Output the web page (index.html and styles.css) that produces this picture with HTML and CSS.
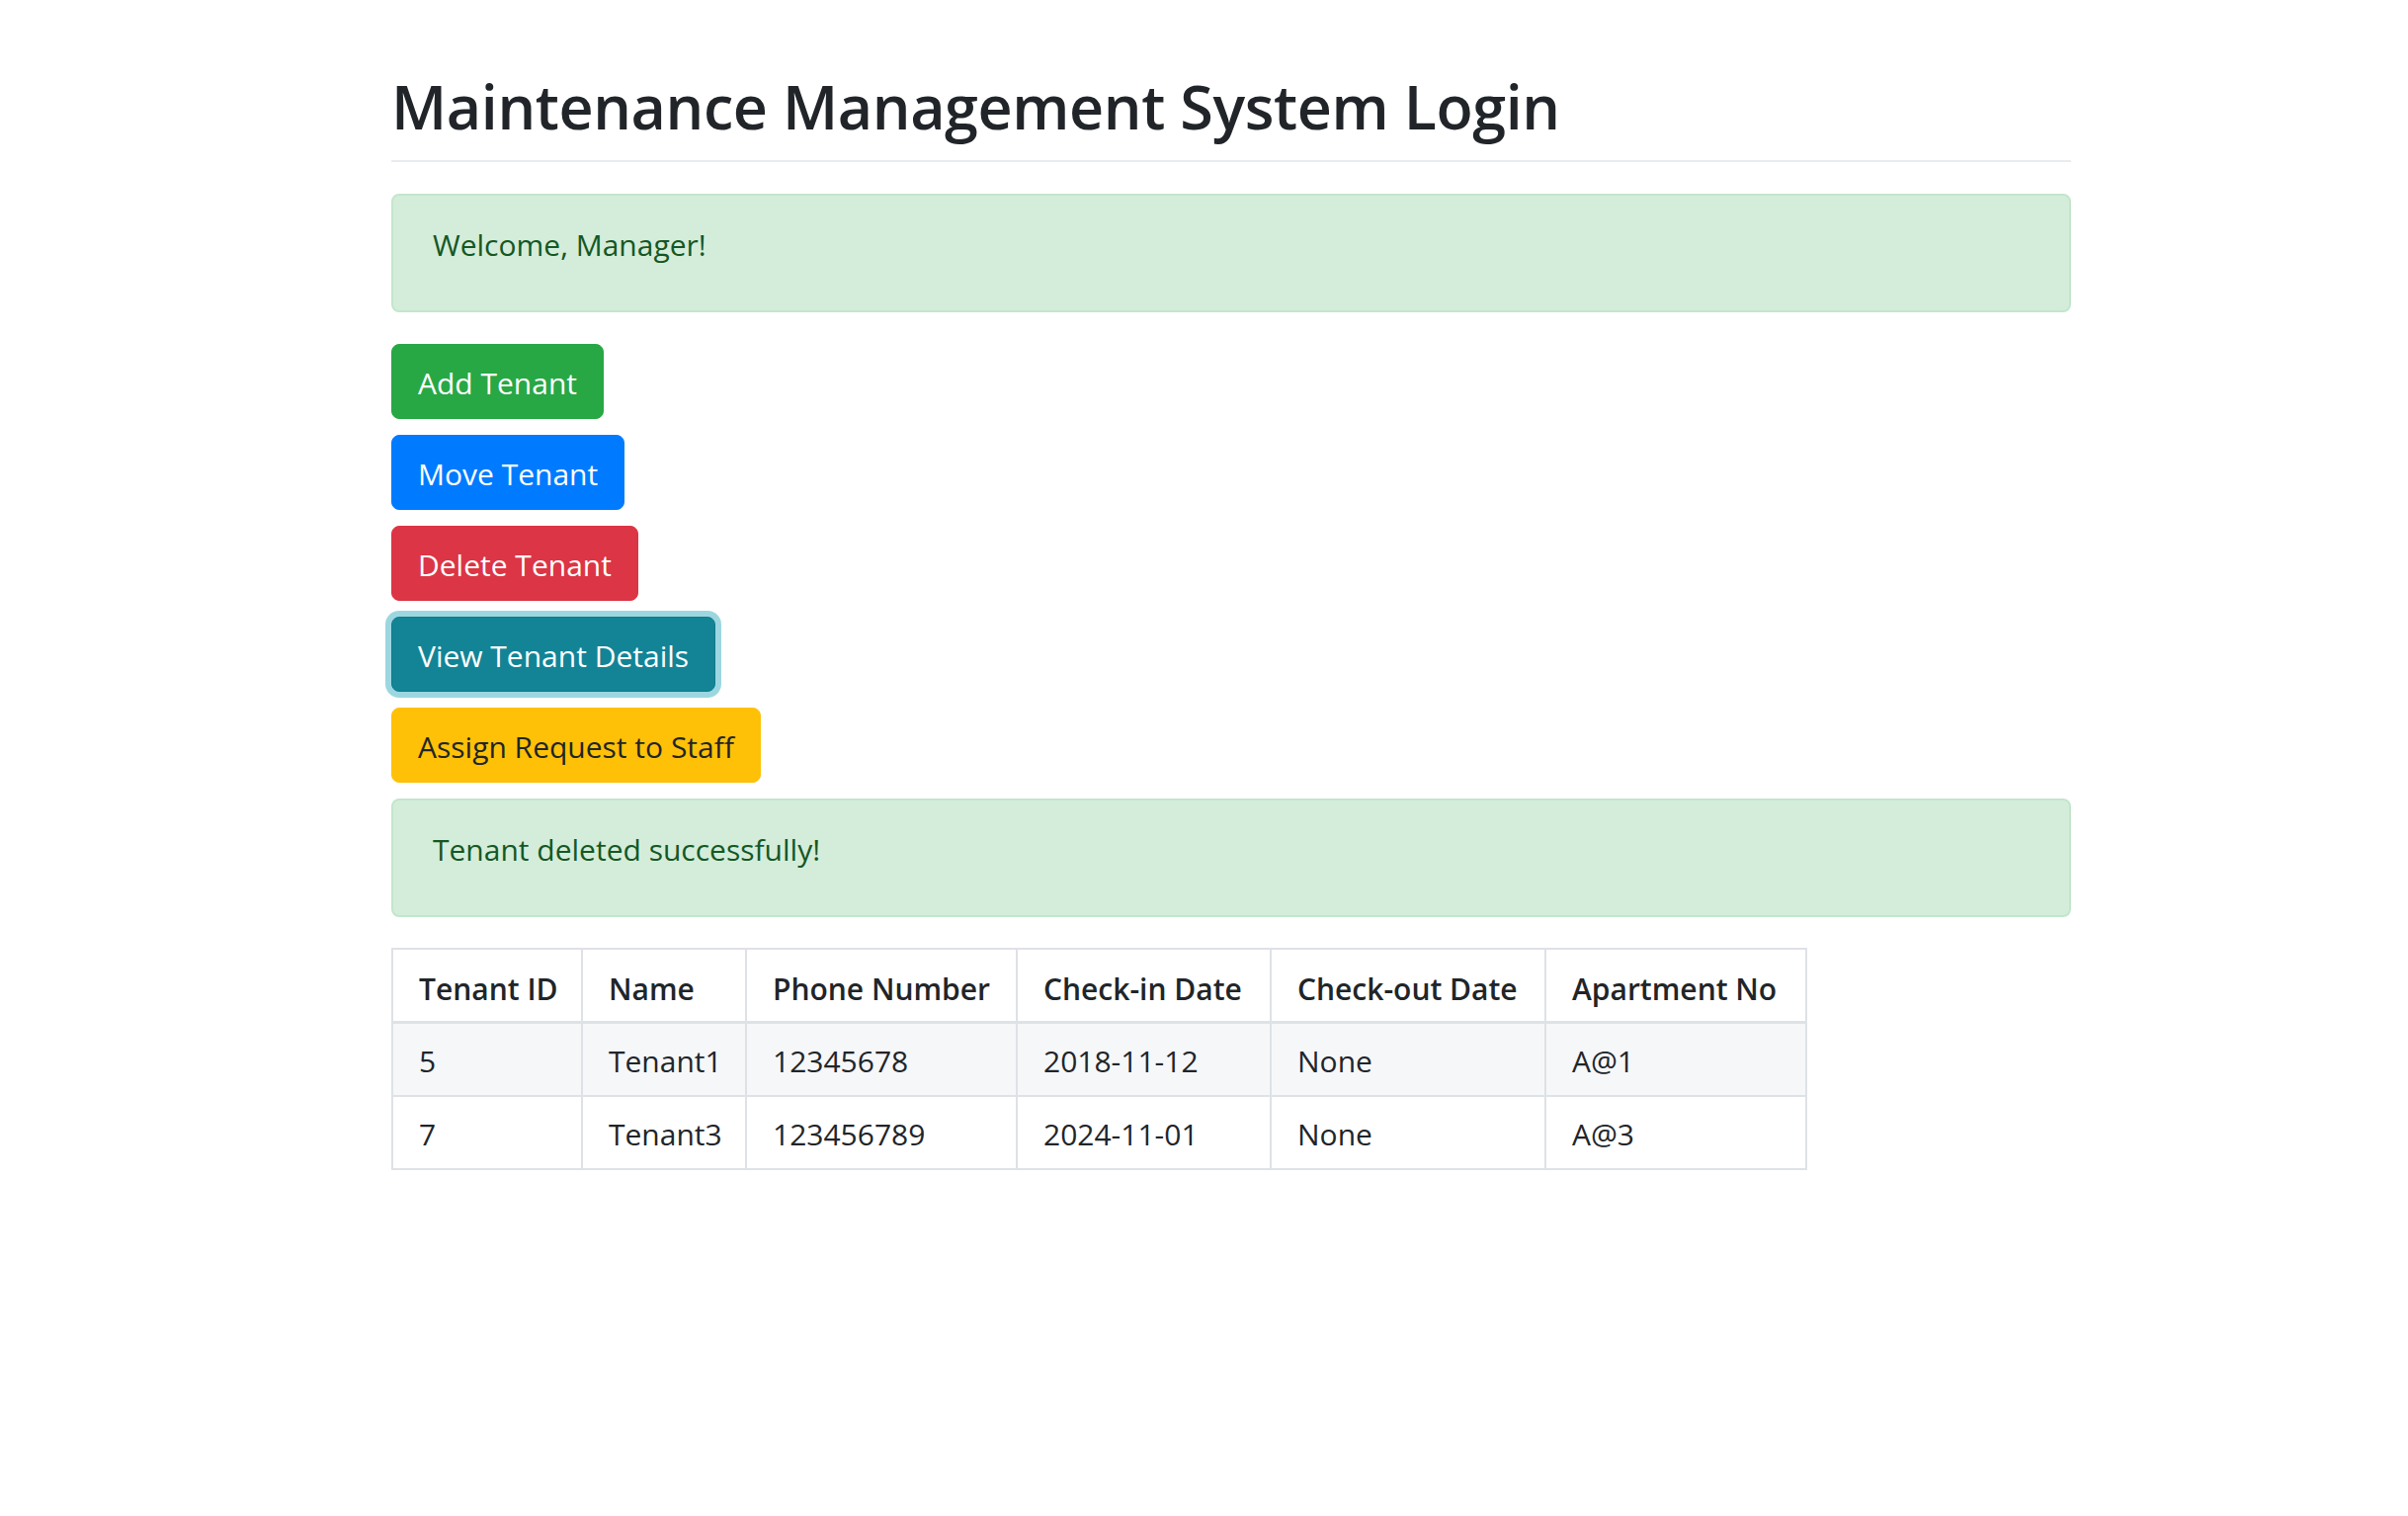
FILE: index.html
```html
<!DOCTYPE html>
<html lang="en">
<head>
<meta charset="utf-8">
<title>Maintenance Management System Login</title>
<link rel="stylesheet" href="styles.css">
</head>
<body>
<div class="container">
  <h1 class="page-title">Maintenance Management System Login</h1>

  <div class="alert alert-success">Welcome, Manager!</div>

  <div class="actions">
    <button class="btn btn-success" type="button">Add Tenant</button>
    <button class="btn btn-primary" type="button">Move Tenant</button>
    <button class="btn btn-danger" type="button">Delete Tenant</button>
    <button class="btn btn-info is-focused" type="button">View Tenant Details</button>
    <button class="btn btn-warning" type="button">Assign Request to Staff</button>
  </div>

  <div class="alert alert-success alert-result">Tenant deleted successfully!</div>

  <table class="table">
    <colgroup>
      <col class="c-id">
      <col class="c-name">
      <col class="c-phone">
      <col class="c-in">
      <col class="c-out">
      <col class="c-apt">
    </colgroup>
    <thead>
      <tr>
        <th>Tenant ID</th>
        <th>Name</th>
        <th>Phone Number</th>
        <th>Check-in Date</th>
        <th>Check-out Date</th>
        <th>Apartment No</th>
      </tr>
    </thead>
    <tbody>
      <tr class="striped">
        <td>5</td>
        <td>Tenant1</td>
        <td>12345678</td>
        <td>2018-11-12</td>
        <td>None</td>
        <td>A@1</td>
      </tr>
      <tr>
        <td>7</td>
        <td>Tenant3</td>
        <td>123456789</td>
        <td>2024-11-01</td>
        <td>None</td>
        <td>A@3</td>
      </tr>
    </tbody>
  </table>
</div>
</body>
</html>
```

FILE: styles.css
```css
html, body {
  margin: 0;
  padding: 0;
  background: #ffffff;
}

body {
  font-family: "Open Sans", "Noto Sans", "Liberation Sans", sans-serif;
  font-size: 30px;
  line-height: 46px;
  color: #212529;
}

.container {
  width: 1700px;
  margin-left: 396px;
}

.page-title {
  margin: 71px 0 0;
  padding-bottom: 18px;
  border-bottom: 2px solid #e9ecef;
  font-size: 61px;
  line-height: 73px;
  font-weight: 600;
  color: #212529;
  letter-spacing: -0.4px;
}

.alert {
  margin-top: 32px;
  padding: 27px 40px 43px;
  border: 2px solid #c3e6cb;
  border-radius: 8px;
  background: #d4edda;
  color: #155724;
}

.alert-result {
  margin-top: 16px;
}

.actions {
  display: flex;
  flex-direction: column;
  align-items: flex-start;
  gap: 16px;
  margin-top: 32px;
}

.btn {
  font-family: inherit;
  font-size: 30px;
  line-height: 46px;
  font-weight: 400;
  padding: 16px 26px 12px;
  border: 1px solid transparent;
  border-radius: 8px;
  color: #ffffff;
  cursor: pointer;
}

.btn-success {
  background: #28a745;
  border-color: #28a745;
}

.btn-primary {
  background: #007bff;
  border-color: #007bff;
}

.btn-danger {
  background: #dc3545;
  border-color: #dc3545;
}

.btn-info {
  background: #17a2b8;
  border-color: #17a2b8;
}

.btn-info.is-focused {
  background: #138496;
  border-color: #117a8b;
  box-shadow: 0 0 0 6px rgba(58, 176, 195, 0.5);
}

.btn-warning {
  background: #ffc107;
  border-color: #ffc107;
  color: #212529;
}

.table {
  margin-top: 31px;
  width: 1431px;
  table-layout: fixed;
  border-collapse: collapse;
  border: 2px solid #dee2e6;
}

.c-id { width: 192px; }
.c-name { width: 166px; }
.c-phone { width: 274px; }
.c-in { width: 257px; }
.c-out { width: 278px; }
.c-apt { width: 264px; }

.table th,
.table td {
  padding: 15px 26px 11px;
  border: 2px solid #dee2e6;
  text-align: left;
  vertical-align: top;
  white-space: nowrap;
}

.table th {
  padding-top: 17px;
  padding-bottom: 9px;
  font-weight: 600;
  border-bottom-width: 3px;
}

.table tr.striped td {
  background: #f6f7f9;
}
```
